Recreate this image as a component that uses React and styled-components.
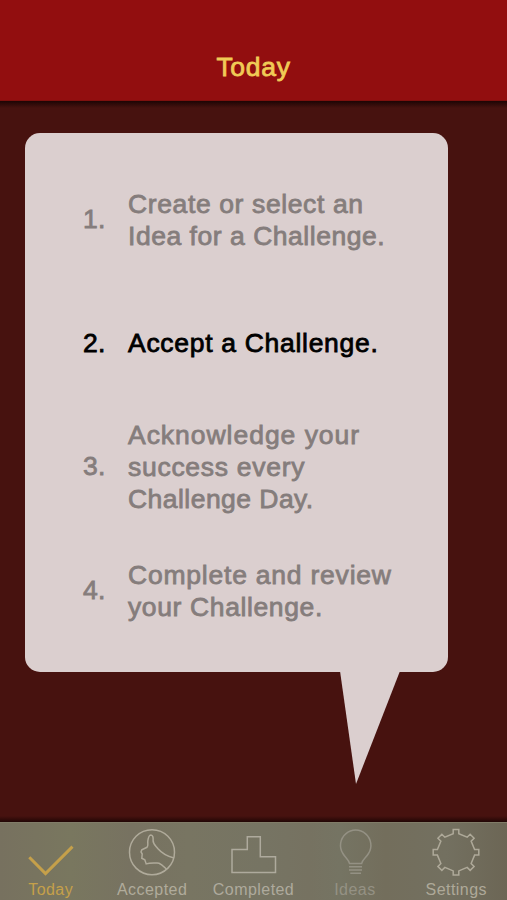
import React from 'react';
import styled, { createGlobalStyle } from 'styled-components';

const steps = [
  {
    lines: [
      { text: 'Create or select an', spacing: 0.62 },
      { text: 'Idea for a Challenge.', spacing: 0.53 }
    ]
  },
  { lines: [{ text: 'Accept a Challenge.', spacing: 0.7 }], active: true },
  {
    lines: [
      { text: 'Acknowledge your', spacing: 0.97 },
      { text: 'success every', spacing: 0.72 },
      { text: 'Challenge Day.', spacing: 0.46 }
    ]
  },
  {
    lines: [
      { text: 'Complete and review', spacing: 0.78 },
      { text: 'your Challenge.', spacing: 0.62 }
    ]
  }
];

const CheckIcon = () => (
  <Icon viewBox="0 0 48 48" strokeWidth="3">
    <path d="M2.3 29.2 18.5 45.6 45.5 18.6" />
  </Icon>
);

const ThumbIcon = () => (
  <Icon viewBox="0 0 48 48">
    <circle cx="24" cy="24.2" r="22.5" />
    <path d="M46 30C40 28.5 34 25.5 30 20.8C27.3 17.3 24.9 15.8 25.1 12.5C25.3 9.8 25 7 22.9 6.9C20.6 6.9 20.2 10 19.8 13C19.5 15.8 20.6 17.5 19 19.3L13.8 21.8L13 24L14.2 26L13.8 30.2L16.8 31.8L18.2 35.9C22 34.6 26 35 31 35.2C34 36.5 36 38.8 38.4 41" />
  </Icon>
);

const BlocksIcon = () => (
  <Icon viewBox="0 0 48 48">
    <path d="M2 21.6H17.3V8.7H30.3V28.7H45.5V44.5H2Z" />
  </Icon>
);

const BulbIcon = () => (
  <Icon viewBox="0 0 48 48">
    <path d="M18.5 35.4C17.7 31.5 14.5 30 11.9 25.5A15.2 15.2 0 1 1 37.5 25.5C34.9 30 31.3 31.5 30.7 35.4Z" />
    <path d="M18 38.7H31M18 42H31M19.3 45.3H30" />
  </Icon>
);

const GearIcon = () => (
  <Icon viewBox="0 0 48 48">
    <path d={gearPath()} />
  </Icon>
);

// eight square teeth joined by short straight edges
function gearPath() {
  const tooth = [
    [-2.8, -18.6],
    [-2.8, -22.8],
    [2.8, -22.8],
    [2.8, -18.6]
  ];
  const points = [];
  for (let i = 0; i < 8; i++) {
    const a = (i * Math.PI) / 4;
    tooth.forEach(([x, y]) => {
      const px = 24 + x * Math.cos(a) - y * Math.sin(a);
      const py = 24.3 + x * Math.sin(a) + y * Math.cos(a);
      points.push(`${px.toFixed(2)} ${py.toFixed(2)}`);
    });
  }
  return `M${points.join('L')}Z`;
}

const tabs = [
  { label: 'Today', icon: CheckIcon, color: '#c5a04a' },
  { label: 'Accepted', icon: ThumbIcon, color: '#b0ab9b' },
  { label: 'Completed', icon: BlocksIcon, color: '#aeaa9d' },
  { label: 'Ideas', icon: BulbIcon, color: '#949184' },
  { label: 'Settings', icon: GearIcon, color: '#aea999' }
];

const App = () => {
  return (
    <StScreen>
      <GlobalStyle />
      <StHeader>
        <StTitle>Today</StTitle>
      </StHeader>
      <StMain>
        <StBubble>
          <StSteps>
            {steps.map((step, index) => (
              <StStep key={index} $active={step.active}>
                <StNumber>{index + 1}.</StNumber>
                <StText $single={step.lines.length === 1}>
                  {step.lines.map((line) => (
                    <StLine key={line.text} $spacing={line.spacing}>
                      {line.text}
                    </StLine>
                  ))}
                </StText>
              </StStep>
            ))}
          </StSteps>
          <StTail viewBox="0 0 60 113">
            <path d="M0 0H60L16 113Z" />
          </StTail>
        </StBubble>
      </StMain>
      <StTabBar>
        {tabs.map(({ label, icon: TabIcon, color }) => (
          <StTab key={label} $color={color}>
            <TabIcon />
            <StLabel>{label}</StLabel>
          </StTab>
        ))}
      </StTabBar>
    </StScreen>
  );
};

export default App;

const GlobalStyle = createGlobalStyle`
  * {
    box-sizing: border-box;
  }
  body {
    margin: 0;
    font-family: 'Liberation Sans', Helvetica, Arial, sans-serif;
  }
`;

const StScreen = styled.div`
  width: 100%;
  height: 900px;
  overflow: hidden;
  display: flex;
  flex-direction: column;
  background-color: #47120f;
`;

const StHeader = styled.header`
  height: 101px;
  flex-shrink: 0;
  padding-top: 51px;
  background-color: #920e0f;
  border-bottom: 1px solid #80100e;
  text-align: center;
`;

const StTitle = styled.h1`
  margin: 0;
  color: #f0cb56;
  font-size: 26.5px;
  font-weight: 400;
  line-height: 32px;
  letter-spacing: 0.7px;
  -webkit-text-stroke: 0.8px currentColor;
`;

const StMain = styled.main`
  flex: 1;
  padding: 32px 59px 0 25px;
  background: linear-gradient(to bottom, #1e0504 0, #47120f 7px, #47120f calc(100% - 6px), #210605 100%);
`;

const StBubble = styled.section`
  position: relative;
  height: 539px;
  padding: 25px 0 0 58px;
  border-radius: 15px;
  background-color: #dbcfcf;
`;

const StSteps = styled.ol`
  margin: 0;
  padding: 0;
  list-style: none;
`;

const StStep = styled.li`
  height: 123.7px;
  display: flex;
  align-items: center;
  color: ${({ $active }) => ($active ? '#000000' : '#857d7c')};
  font-size: 26.5px;
  line-height: 32px;
  -webkit-text-stroke: 0.8px currentColor;
`;

const StNumber = styled.span`
  width: 45px;
  flex-shrink: 0;
  padding-bottom: 2px;
  letter-spacing: 0.3px;
`;

const StText = styled.div`
  padding-bottom: ${({ $single }) => ($single ? '2px' : '0')};
`;

const StLine = styled.div`
  white-space: nowrap;
  letter-spacing: ${({ $spacing }) => $spacing}px;
`;

const StTail = styled.svg`
  position: absolute;
  top: 538px;
  left: 315px;
  width: 60px;
  height: 113px;
  fill: #dbcfcf;
`;

const StTabBar = styled.nav`
  height: 78px;
  flex-shrink: 0;
  display: flex;
  border-top: 1px solid #817c68;
  background: linear-gradient(
    to right,
    #77715f 0%,
    #79775f 14%,
    #777261 26%,
    #787562 37%,
    #767463 52%,
    #767261 61%,
    #757463 67%,
    #736e5c 76%,
    #737060 88%,
    #6c6655 100%
  );
`;

const StTab = styled.div`
  flex: 1;
  padding-top: 5px;
  display: flex;
  flex-direction: column;
  align-items: center;
  color: ${({ $color }) => $color};
`;

const Icon = styled.svg`
  width: 48px;
  height: 48px;
  flex-shrink: 0;
  overflow: visible;
  fill: none;
  stroke: currentColor;
  stroke-width: ${({ strokeWidth }) => strokeWidth || 1.5};
`;

const StLabel = styled.span`
  margin-top: 4px;
  font-size: 16px;
  line-height: 20px;
  letter-spacing: 0.45px;
`;
